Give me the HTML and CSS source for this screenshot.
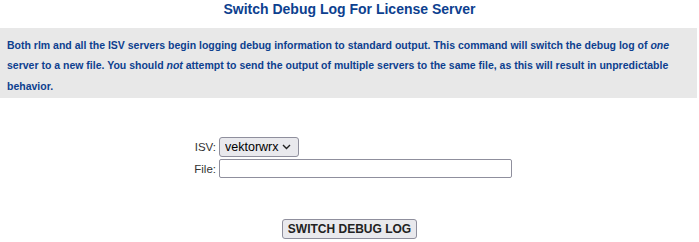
FILE: index.html
```html
<!DOCTYPE html>
<html>
<head>
<meta charset="utf-8">
<link rel="stylesheet" href="styles.css">
</head>
<body>
<h1 class="title">Switch Debug Log For License Server</h1>
<div class="note">Both rlm and all the ISV servers begin logging debug information to standard output. This command will switch the debug log of <i>one</i> server to a new file. You should <i>not</i> attempt to send the output of multiple servers to the same file, as this will result in unpredictable behavior.</div>
<form class="form">
  <div class="fields">
    <label class="lbl">ISV:</label>
    <div class="selwrap">
      <select class="sel"><option>vektorwrx</option></select>
      <svg class="chev" width="9" height="6" viewBox="0 0 9 6"><path d="M1 1 L4.5 4.5 L8 1" fill="none" stroke="#222" stroke-width="1.4"/></svg>
    </div>
    <label class="lbl">File:</label>
    <div><input class="inp" type="text"></div>
  </div>
  <div class="actions"><button class="btn" type="button">SWITCH DEBUG LOG</button></div>
</form>
</body>
</html>
```
FILE: styles.css
```css
html, body { margin: 0; padding: 0; background: #fff; }
body { font-family: "Liberation Sans", Arial, sans-serif; color: #0d3f8f; }
.title { margin: 0; height: 28px; padding-top: 1px; box-sizing: border-box; line-height: 16px; font-size: 14px; font-weight: bold; text-align: center; color: #0d3f8f; }
.note { margin: 0 2px 0 0; background: #e8e8e8; padding: 7px 2px 2px 7px; font-size: 10.5px; font-weight: bold; line-height: 20.4px; color: #0d3f8f; }
.form { padding-top: 39px; }
.fields { display: grid; grid-template-columns: 219px auto; row-gap: 2px; align-items: center; }
.lbl { text-align: right; font-size: 11.5px; color: #333; padding-right: 3px; }
.selwrap { position: relative; width: 80px; height: 20px; }
.sel { appearance: none; -webkit-appearance: none; font-family: "Liberation Sans", Arial, sans-serif; font-size: 12.5px; height: 20px; width: 80px; color: #000; border: 1px solid #8f8f9d; border-radius: 3px; background: #e9e9ed; padding: 0 0 0 5px; margin: 0; box-sizing: border-box; }
.chev { position: absolute; left: 63px; top: 7px; pointer-events: none; }
.inp { display: block; width: 293px; height: 19px; box-sizing: border-box; border: 1px solid #8f8f9d; border-radius: 2px; padding: 0 3px; margin: 0; }
.actions { text-align: center; padding-top: 41px; }
.btn { font-family: "Liberation Sans", Arial, sans-serif; font-size: 12px; font-weight: bold; color: #222; background: #e9e9ed; border: 1px solid #8f8f9d; border-radius: 3px; padding: 0 5px; height: 20px; margin: 0; }
```
